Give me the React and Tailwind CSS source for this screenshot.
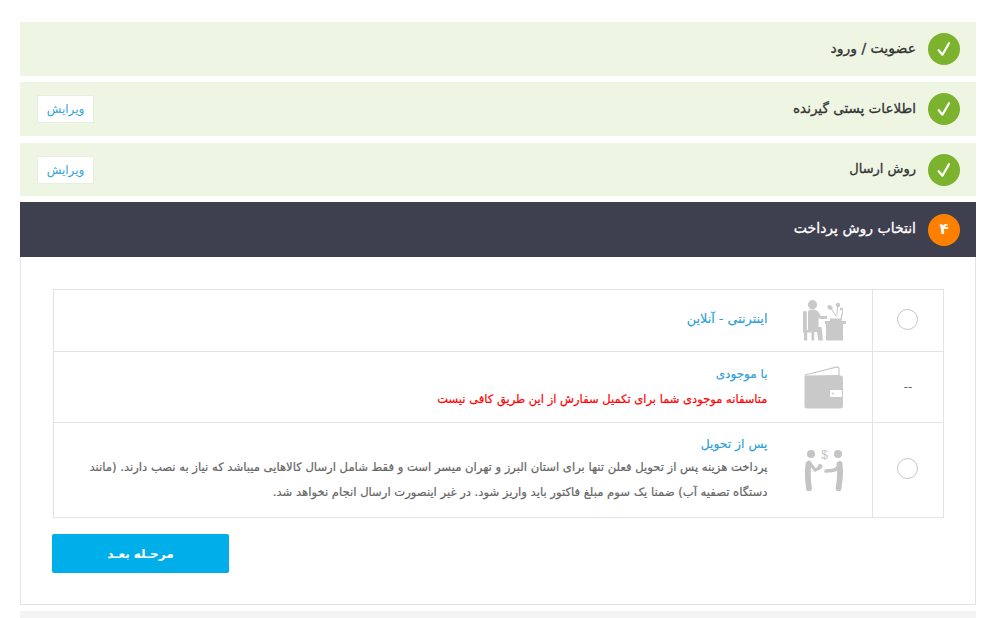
const Check = () => (
  <svg width="16" height="16" viewBox="0 0 16 16" fill="none">
    <path d="M2.700 9.200 L6.400 13.700 L13 2.200" stroke="#fff" strokeWidth="2.200" strokeLinecap="round" strokeLinejoin="round" />
  </svg>
);

const StepRow = ({ title, edit, h, size }) => (
  <div className={`flex items-center justify-between bg-[#eef5e3] pl-[17px] pr-4 ${h}`}>
    <div className="order-2 flex items-center gap-3">
      <span className={`pb-[2px] text-[#333] [-webkit-text-stroke:0.3px_#333] ${size}`}>{title}</span>
      <span className="flex h-8 w-8 items-center justify-center rounded-full bg-[#7cb32e]"><Check /></span>
    </div>
    {edit ? (
      <button className="order-1 flex h-[28px] w-[57px] items-center justify-center border border-[#e9eee2] bg-white text-[12px] text-[#35a3dc]">ویرایش</button>
    ) : <span className="order-1" />}
  </div>
);

const Radio = () => <span className="mx-auto mb-[3px] block h-[21px] w-[21px] -translate-x-[1px] rounded-full border border-[#c4c4c4] bg-white" />;

const DeskIcon = () => (
  <svg width="43" height="41" viewBox="0 0 43 41" fill="#c9c9c9">
    <circle cx="9.500" cy="4.700" r="4.600" />
    <rect x="0" y="11" width="3.800" height="22" rx="1.500" />
    <path d="M5 13c0-3 2-3.500 5-3.500 3 0 5 1.500 6 3.500l2 3h6v3h-7l-1.500-1.500V27h3l1.500 13.500h-4.500L14 32H5z" />
    <path d="M1 30h10v2.500H4.200V40.500H1zM8.500 32h2.800v8.500H8.500z" />
    <path d="M22 21h21v3h-3V40.500H23V24h-1z" />
    <path d="M27 18.500h10.500l1.700-7.500 1 .3L38.500 21H27z" />
    <ellipse cx="27" cy="7.500" rx="2.800" ry="2" transform="rotate(35 27 7.500)" />
    <circle cx="35" cy="5" r="2.200" />
    <circle cx="38.500" cy="9" r="1.600" />
    <path d="M29 9l5 7.500-.8.500-5-7.500zM35 7l-.5 8h-1l.5-8z" />
  </svg>
);

const WalletIcon = () => (
  <svg width="40" height="43" viewBox="0 0 40 43" fill="none">
    <path d="M1 9 L33 0.800 Q35 0.800 35 3 V10" stroke="#c9c9c9" strokeWidth="1.200" />
    <path d="M0.500 9.500 L33 9 Q39 9 39 12 V40 Q39 42.500 36 42.500 H3.500 Q0.500 42.500 0.500 40 Z" fill="#c9c9c9" />
    <rect x="26" y="24" width="12" height="7" rx="0.800" fill="#fff" />
    <circle cx="29" cy="27.500" r="0.900" fill="#c9c9c9" />
  </svg>
);

const HandsIcon = () => (
  <svg width="42" height="42" viewBox="0 0 42 42" fill="none">
    <circle cx="9" cy="5" r="4" fill="#c4c4c4" />
    <circle cx="36" cy="5" r="4" fill="#c4c4c4" />
    <text x="22.500" y="9.500" fontSize="12" fontFamily="Liberation Sans, sans-serif" textAnchor="middle" fill="#c4c4c4">$</text>
    <path d="M6.500 15 Q5 26 7 39.500" stroke="#c4c4c4" strokeWidth="5.800" strokeLinecap="round" />
    <path d="M7 13 L13 21 L17.500 19" stroke="#c4c4c4" strokeWidth="3.200" strokeLinecap="round" strokeLinejoin="round" />
    <circle cx="18" cy="17.500" r="2.400" fill="#c4c4c4" />
    <path d="M37.500 15 Q39 26 36.500 39.500" stroke="#c4c4c4" strokeWidth="5.800" strokeLinecap="round" />
    <path d="M38 14 Q36 21 30 21.500 L24 22" stroke="#c4c4c4" strokeWidth="3.400" strokeLinecap="round" />
  </svg>
);

export default function App() {
  return (
    <div dir="ltr" className="h-[618px] w-[1000px] overflow-hidden bg-white pl-5 pr-6 pt-[22px] font-['DejaVu_Sans',sans-serif]">
      <div className="flex flex-col">
        <StepRow title="عضویت / ورود" h="h-[54px]" size="text-[14px]" />
        <div className="mt-[6px]"><StepRow title="اطلاعات پستی گیرنده" edit h="h-[54px]" size="text-[13.500px]" /></div>
        <div className="mt-[7px]"><StepRow title="روش ارسال" edit h="h-[53px]" size="text-[13px]" /></div>
        <div className="mt-[6px] flex h-[55px] items-center justify-end gap-3 bg-[#3f404f] pr-4">
          <span className="pb-[2px] text-[14px] text-white [-webkit-text-stroke:0.3px_#fff]">انتخاب روش پرداخت</span>
          <span className="flex h-8 w-8 items-center justify-center rounded-full bg-[#ff8000] text-[15px] font-bold text-white">۴</span>
        </div>
        <div className="h-[348px] border border-t-0 border-[#e3e3e3] pl-[32px] pr-[31px] pt-8">
          <table className="w-[891px] table-fixed border-collapse border border-[#e3e3e3]">
            <colgroup>
              <col />
              <col className="w-[92px]" />
              <col className="w-[71px]" />
            </colgroup>
            <tbody>
              <tr className="h-[62px] border-b border-[#e3e3e3]">
                <td dir="rtl" className="pb-[3px] pr-[13px] text-[12.800px] text-[#2a9fd6] [-webkit-text-stroke:0.15px_#2a9fd6]">اینترنتی - آنلاین</td>
                <td><div className="flex justify-center pr-1"><DeskIcon /></div></td>
                <td className="border-l border-[#e3e3e3]"><Radio /></td>
              </tr>
              <tr className="h-[71px] border-b border-[#e3e3e3]">
                <td dir="rtl" className="pr-[13px]">
                  <div className="-mt-[2px] text-[12px] leading-5 text-[#2a9fd6] [-webkit-text-stroke:0.15px_#2a9fd6]">با موجودی</div>
                  <div className="mt-[5px] text-[11.500px] leading-5 text-[#ff0000] [-webkit-text-stroke:0.2px_#ff0000]">متاسفانه موجودی شما برای تکمیل سفارش از این طریق کافی نیست</div>
                </td>
                <td><div className="flex justify-center pr-1"><WalletIcon /></div></td>
                <td className="border-l border-[#e3e3e3] text-center text-[12px] text-[#666]">--</td>
              </tr>
              <tr className="h-[95px]">
                <td dir="rtl" className="pl-3 pr-[13px]">
                  <div className="-mt-[2px] text-[12.300px] leading-5 text-[#2a9fd6] [-webkit-text-stroke:0.15px_#2a9fd6]">پس از تحویل</div>
                  <p className="mt-[1px] text-[11.600px] leading-[25px] text-[#666] [-webkit-text-stroke:0.2px_#666]">پرداخت هزینه پس از تحویل فعلن تنها برای استان البرز و تهران میسر است و فقط شامل ارسال کالاهایی میباشد که نیاز به نصب دارند. (مانند دستگاه تصفیه آب) ضمنا یک سوم مبلغ فاکتور باید واریز شود. در غیر اینصورت ارسال انجام نخواهد شد.</p>
                </td>
                <td><div className="flex justify-center pr-[6px]"><HandsIcon /></div></td>
                <td className="border-l border-[#e3e3e3]"><Radio /></td>
              </tr>
            </tbody>
          </table>
          <button className="-ml-px mt-4 flex h-[39px] w-[177px] items-center justify-center rounded-[2px] bg-[#00aeea] text-[12px] font-bold text-white">مرحـله بعـد</button>
        </div>
        <div className="mt-[6px] h-[8px] bg-[#f4f4f4]" />
      </div>
    </div>
  );
}
